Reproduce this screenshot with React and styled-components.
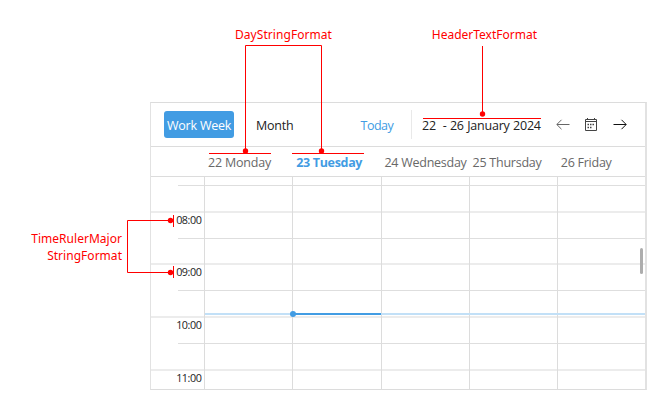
import React from "react";
import styled, { createGlobalStyle } from "styled-components";

const GlobalStyle = createGlobalStyle`
  * { box-sizing: border-box; }
  body { margin: 0; background: #fff; font-family: "Open Sans", "Noto Sans", sans-serif; }
`;

const Page = styled.main`
  position: relative;
  width: 654px;
  height: 400px;
  padding: 102px 0 0 150px;
  overflow: hidden;
  background: #fff;
`;

const Scheduler = styled.section`
  display: flex;
  flex-direction: column;
  width: 497px;
  height: 288px;
  border: 1px solid #dcdcdc;
  border-left: 1px solid #e2e2e2;
  border-right: 2px solid #e2e2e2;
`;

const Toolbar = styled.header`
  display: flex;
  align-items: center;
  height: 44px;
  padding-left: 13px;
  border-bottom: 1px solid #dcdcdc;
  font-size: 12.5px;
  white-space: nowrap;
`;

const ViewButton = styled.button`
  width: ${(p) => p.$width}px;
  height: 27px;
  padding: 1px 0 0 ${(p) => p.$inset || 0}px;
  border: 0;
  border-radius: 3px;
  background: ${(p) => (p.$active ? "#429ce3" : "transparent")};
  color: ${(p) => p.$color};
  font: inherit;
  text-align: left;
  white-space: nowrap;
  letter-spacing: ${(p) => p.$spacing}px;
  margin-left: ${(p) => p.$gap || 0}px;
  line-height: 28px;
`;

const Divider = styled.span`
  width: 1px;
  height: 29px;
  margin-left: 15px;
  background: #e9e9e9;
`;

const RangeTitle = styled.span`
  width: 143px;
  padding: 2px 0 0 10px;
  color: #222;
  line-height: 28px;
  letter-spacing: -0.22px;
  word-spacing: 0.4px;
  white-space: pre;
`;

const Icons = styled.div`
  display: flex;
  align-items: center;
  gap: 14px;
  height: 28px;
  svg { display: block; fill: none; stroke-width: 1; }
`;

const DayHeader = styled.div`
  display: grid;
  grid-template-columns: 54px repeat(5, 88.2px);
  height: 30px;
  border-bottom: 1px solid #dcdcdc;
`;

const DayName = styled.span`
  padding-left: 3px;
  color: ${(p) => (p.$today ? "#429ce3" : "#686868")};
  font-size: 12.5px;
  font-weight: ${(p) => (p.$today ? 700 : 400)};
  letter-spacing: ${(p) => p.$spacing}px;
  line-height: 31px;
  white-space: nowrap;
`;

const TimeGrid = styled.div`
  flex: 1;
  overflow: hidden;
`;

const SlotRow = styled.div`
  display: grid;
  grid-template-columns: 27px 27px repeat(4, 88.25px) 1fr;
  height: ${(p) => p.$height}px;
  box-shadow: ${(p) => (p.$major ? "inset 0 -2px #ececec" : "none")};
`;

const Slot = styled.div`
  border-right: 1px solid #dcdcdc;
  border-bottom: ${(p) => (p.$line ? "1px solid #dedede" : "0")};
  &:last-child { border-right: 0; }
`;

const RulerSlot = styled(Slot)`
  display: flex;
  justify-content: flex-end;
  padding-right: 2.6px;
`;

const Hour = styled.time`
  color: #222;
  font-size: 10.8px;
  line-height: 13px;
  letter-spacing: -0.45px;
  white-space: nowrap;
`;

const NowLine = styled.div`
  position: absolute;
  left: 205px;
  top: 313px;
  display: flex;
  width: 440px;
  height: 2px;
  background: #c2e0f7;
`;

const NowToday = styled.span`
  width: 88px;
  margin-left: 88px;
  background: #429ce3;
`;

const NowDot = styled.span`
  position: absolute;
  left: 85px;
  top: -2px;
  width: 6px;
  height: 6px;
  border-radius: 50%;
  background: #429ce3;
`;

const ScrollThumb = styled.div`
  position: absolute;
  left: 640px;
  top: 248px;
  width: 2.5px;
  height: 26px;
  border-radius: 2px;
  background: #adadad;
`;

const CalloutLabel = styled.div`
  position: absolute;
  left: ${(p) => p.$x}px;
  top: ${(p) => p.$y}px;
  width: ${(p) => p.$width}px;
  color: #f00;
  font-family: "Noto Sans", sans-serif;
  font-size: 12px;
  line-height: 17px;
  letter-spacing: ${(p) => p.$spacing}px;
  text-align: right;
  white-space: nowrap;
`;

const Connectors = styled.svg`
  position: absolute;
  inset: 0;
  pointer-events: none;
`;

const days = [
  { name: "22 Monday", spacing: -0.2 },
  { name: "23 Tuesday", spacing: -0.32, today: true },
  { name: "24 Wednesday", spacing: -0.25 },
  { name: "25 Thursday", spacing: -0.25 },
  { name: "26 Friday", spacing: -0.25 },
];

const slots = [
  { height: 9 },
  { height: 27, major: true },
  { height: 26, hour: "08:00" },
  { height: 26, major: true },
  { height: 26, hour: "09:00" },
  { height: 27, major: true },
  { height: 26, hour: "10:00" },
  { height: 27, major: true },
  { height: 18, hour: "11:00", last: true },
];

const dots = [[245.5, 151], [321.5, 151], [482.5, 114], [170.5, 220.5], [170.5, 272.5]];

export default function App() {
  return (
    <>
      <GlobalStyle />
      <Page>
        <Scheduler>
          <Toolbar>
            <ViewButton $active $width={70} $inset={3} $color="#fff" $spacing={-0.22}>Work Week</ViewButton>
            <ViewButton $width={50} $gap={22} $color="#222" $spacing={-0.25}>Month</ViewButton>
            <ViewButton $width={36} $gap={54} $inset={0.5} $color="#429ce3" $spacing={-0.5}>Today</ViewButton>
            <Divider />
            <RangeTitle>{"22  - 26 January 2024"}</RangeTitle>
            <Icons>
              <svg width="15" height="14" viewBox="0 0 15 14" stroke="#666">
                <path d="M14.5 6.5H2M6.5 1.8L1.8 6.5l4.7 4.7" />
              </svg>
              <svg width="15" height="14" viewBox="0 0 15 14" stroke="#444">
                <path d="M1.5 1.5h11v11h-11zM1.5 3.5h11M3.5 0v2M10.5 0v2" />
                <path d="M6 6.5h1.5M8.5 6.5H10M3.5 6.5H5M3.5 9.5H5M6 9.5h1.5" strokeWidth="1.3" />
              </svg>
              <svg width="15" height="14" viewBox="0 0 15 14" stroke="#111">
                <path d="M.5 6.5H13M8.5 1.8L13.2 6.5l-4.7 4.7" />
              </svg>
            </Icons>
          </Toolbar>
          <DayHeader>
            <span />
            {days.map((day) => (
              <DayName key={day.name} $today={day.today} $spacing={day.spacing}>{day.name}</DayName>
            ))}
          </DayHeader>
          <TimeGrid>
            {slots.map((slot, i) => {
              const line = !slot.major && !slot.last;
              return (
                <SlotRow key={i} $height={slot.height} $major={slot.major}>
                  <span />
                  <RulerSlot $line={line}>{slot.hour && <Hour>{slot.hour}</Hour>}</RulerSlot>
                  {days.map((day) => <Slot key={day.name} $line={line} />)}
                </SlotRow>
              );
            })}
          </TimeGrid>
        </Scheduler>
        <NowLine><NowToday /><NowDot /></NowLine>
        <ScrollThumb />
        <Connectors width="654" height="400" fill="none" stroke="#f00">
          <path d="M245.5 151V45.5H321.5V151M482.5 46V114M170 220.5H127.5V272.5H170" />
          <path d="M209 153.5H271M292 153.5H364M423 118.5H541M173.5 215V227M173.5 266V278" />
          {dots.map(([x, y]) => <circle key={`${x}-${y}`} cx={x} cy={y} r="2.7" fill="#f00" stroke="none" />)}
        </Connectors>
        <CalloutLabel $x={230} $y={26} $width={102} $spacing={0.06}>DayStringFormat</CalloutLabel>
        <CalloutLabel $x={427} $y={26} $width={110} $spacing={0}>HeaderTextFormat</CalloutLabel>
        <CalloutLabel $x={22} $y={230} $width={100} $spacing={0.03}>TimeRulerMajor<br />StringFormat</CalloutLabel>
      </Page>
    </>
  );
}
